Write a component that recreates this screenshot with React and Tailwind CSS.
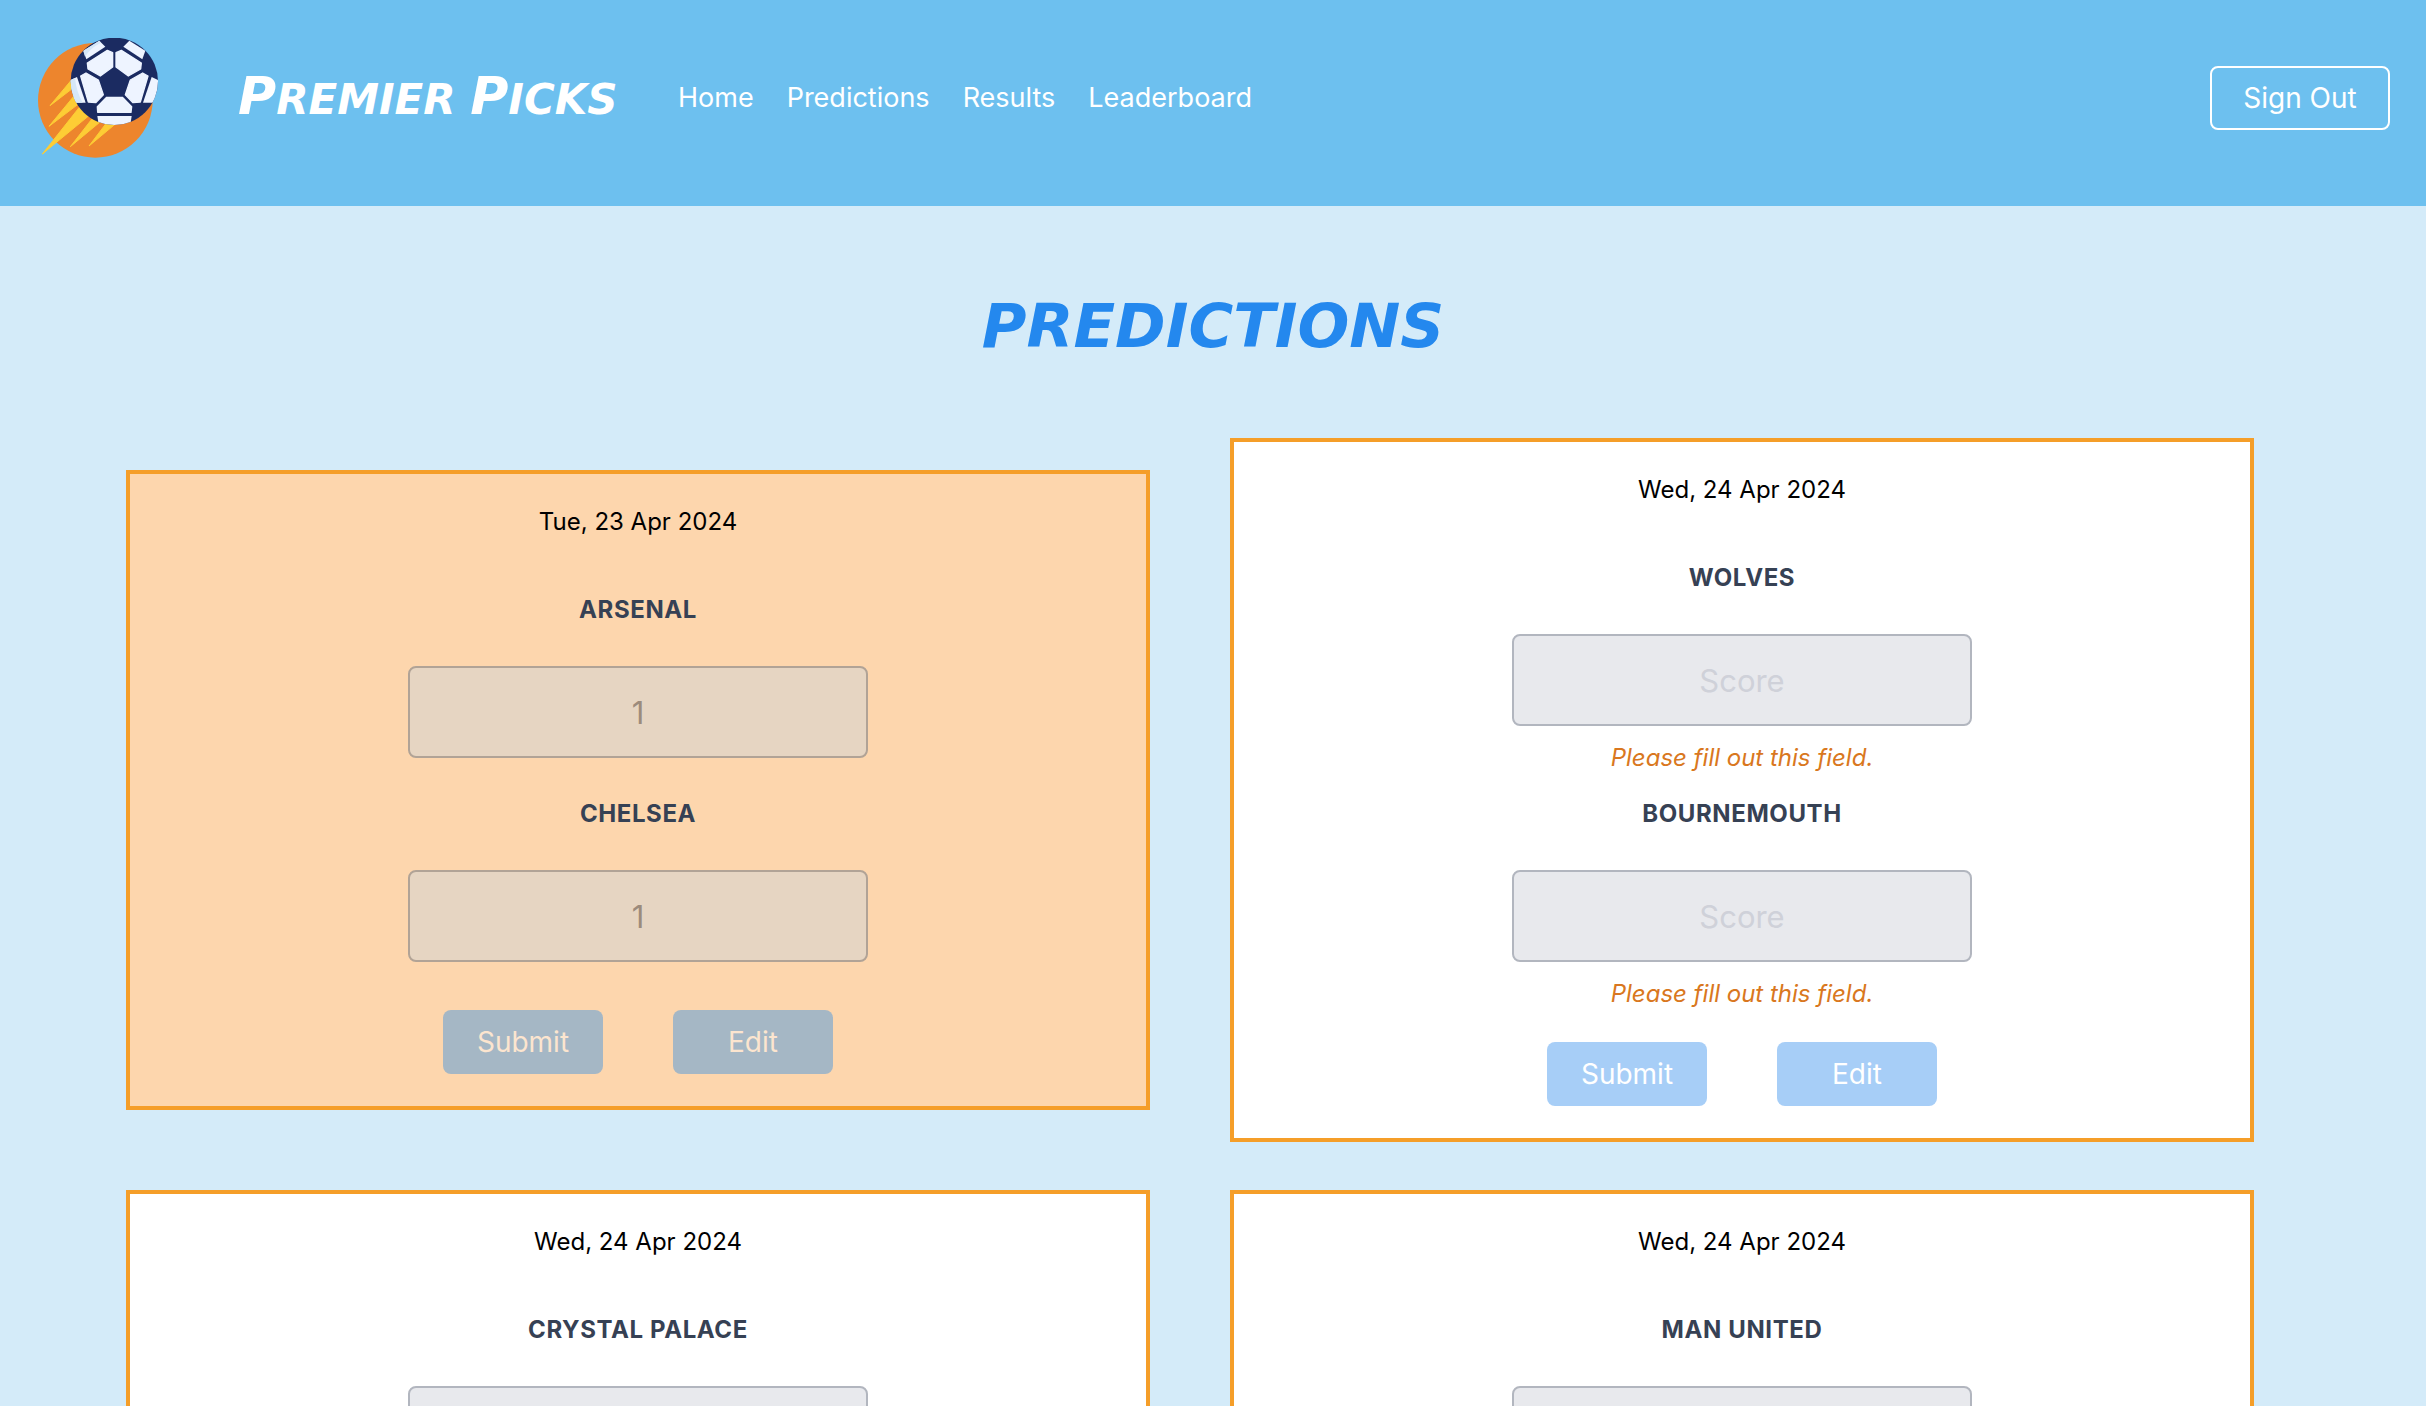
import React from "react";

const MATCHES = [
  { date: "Tue, 23 Apr 2024", home: "Arsenal", away: "Chelsea", submitted: true, homeScore: "1", awayScore: "1" },
  { date: "Wed, 24 Apr 2024", home: "Wolves", away: "Bournemouth" },
  { date: "Wed, 24 Apr 2024", home: "Crystal Palace" },
  { date: "Wed, 24 Apr 2024", home: "Man United" },
];

const LINKS = ["Home", "Predictions", "Results", "Leaderboard"];

function BallSide() {
  return (
    <g strokeWidth="4" strokeLinejoin="round">
      <path d="M262 189 L322 151 L338 158 V201 L301 228 L264 207Z" fill="#eef4ff" stroke="#eef4ff" />
      <path d="M250 152 L298 122 L316 140 L259 178Z" fill="#eef4ff" />
      <path d="M242 228 L258 219 L295 240 L310 284 L287 308 L265 306Z" fill="#eef4ff" stroke="#eef4ff" />
      <path d="M208 242 L231 231 L257 308 L222 308Z" fill="#eef4ff" />
    </g>
  );
}

function Logo() {
  return (
    <svg viewBox="114 114 360 360" className="size-[120px] shrink-0" role="img" aria-label="Premier Picks logo">
      <defs>
        <clipPath id="ball">
          <circle cx="343" cy="244" r="131" />
        </clipPath>
      </defs>
      <circle cx="286" cy="301" r="172" fill="#ed852d" />
      <g fill="#fdcd35" stroke="#fdcd35" strokeWidth="3" strokeLinejoin="round">
        <path d="M150 317 L216 238 L222 262Z" />
        <path d="M147 379 L222 288 L238 310Z" />
        <path d="M127 462 L238 322 L268 346Z" />
        <path d="M211 440 L275 358 L300 366Z" />
        <path d="M267 438 L320 368 L346 372Z" />
      </g>
      <g clipPath="url(#ball)">
        <rect x="210" y="110" width="270" height="270" fill="#1b2b61" />
        <BallSide />
        <g transform="translate(686 0) scale(-1 1)">
          <BallSide />
        </g>
        <path d="M320 292 H367 L395 320 L393 337 H293 L292 320Z" fill="#eef4ff" stroke="#eef4ff" strokeWidth="4" strokeLinejoin="round" />
        <path d="M292 348 H395 L390 380 H297Z" fill="#eef4ff" />
        <path d="M208 242 L225 234 Q229 275 248 308 H222Z" fill="#d5e7f8" />
        <path d="M250 152 L298 122 L303 128 Q272 143 255 170Z" fill="#d5e7f8" />
      </g>
    </svg>
  );
}

function ScoreField({ id, team, value, submitted, follows }) {
  const box = submitted
    ? "border-[#b1a396] bg-[#e6d5c2] text-[#9c8b7c]"
    : "border-[#b2b6bf] bg-[#e8e9ed] placeholder:text-[#cfd1d9]";
  return (
    <>
      <label htmlFor={id} className={`${follows} text-2xl leading-8 font-bold tracking-wide text-[#364154] uppercase`}>
        {team}
      </label>
      <input
        id={id}
        type="text"
        disabled
        placeholder="Score"
        defaultValue={value}
        className={`${box} mt-10 h-[92px] w-full rounded-lg border-2 text-center text-[31px]`}
      />
      {!submitted && <p className="mt-4 text-2xl leading-8 text-[#d97720] italic">Please fill out this field.</p>}
    </>
  );
}

function MatchCard({ match, index }) {
  const { date, home, away, submitted, homeScore, awayScore } = match;
  const button = submitted ? "bg-[#a5b7c5] text-[#fce5cf]" : "bg-[#a7cef7] text-white";
  return (
    <form
      className={`${submitted ? "bg-[#fdd6ad]" : "bg-white"} flex w-full max-w-[1024px] flex-col items-center border-4 border-[#f59e29] py-8`}
    >
      <time className="text-2xl leading-8 text-black">{date}</time>
      <div className="flex w-[460px] max-w-full flex-col items-center">
        <ScoreField id={`home-${index}`} team={home} value={homeScore} submitted={submitted} follows="mt-14" />
        {away && (
          <>
            <ScoreField id={`away-${index}`} team={away} value={awayScore} submitted={submitted} follows={submitted ? "mt-10" : "mt-6"} />
            <div className={`${submitted ? "mt-12" : "mt-8"} grid w-full grid-cols-2 justify-items-center`}>
              <button type="button" disabled className={`${button} h-16 w-40 rounded-lg text-[28px]`}>Submit</button>
              <button type="button" disabled className={`${button} h-16 w-40 rounded-lg text-[28px]`}>Edit</button>
            </div>
          </>
        )}
      </div>
    </form>
  );
}

export default function App() {
  return (
    <div className="h-screen overflow-hidden bg-[#d4ebf9] font-['Inter',sans-serif]">
      <header className="flex items-center bg-[#6dc0ef] pt-[38px] pr-9 pb-12 pl-[38px] text-[28px] text-white">
        <Logo />
        <span className="ml-20 min-w-[392px] font-['DejaVu_Sans',sans-serif] text-[42px] leading-[60px] font-bold whitespace-nowrap uppercase italic">
          <span className="inline-block first-letter:text-[52px]">Premier</span>{" "}
          <span className="inline-block first-letter:text-[52px]">Picks</span>
        </span>
        <nav className="ml-12 flex gap-[33px] text-[27px]">
          {LINKS.map((link) => (
            <a key={link} href={`#${link.toLowerCase()}`}>{link}</a>
          ))}
        </nav>
        <button type="button" className="ml-auto h-16 w-[180px] rounded-lg border-2 border-white">Sign Out</button>
      </header>
      <main className="px-[126px]">
        <h1 className="pt-20 pb-[72px] text-center font-['DejaVu_Sans',sans-serif] text-[61px] leading-20 font-bold text-[#2488ee] uppercase italic">
          Predictions
        </h1>
        <div className="grid grid-cols-2 items-center gap-x-[34px] gap-y-12">
          {MATCHES.map((match, i) => (
            <MatchCard key={i} match={match} index={i} />
          ))}
        </div>
      </main>
    </div>
  );
}
